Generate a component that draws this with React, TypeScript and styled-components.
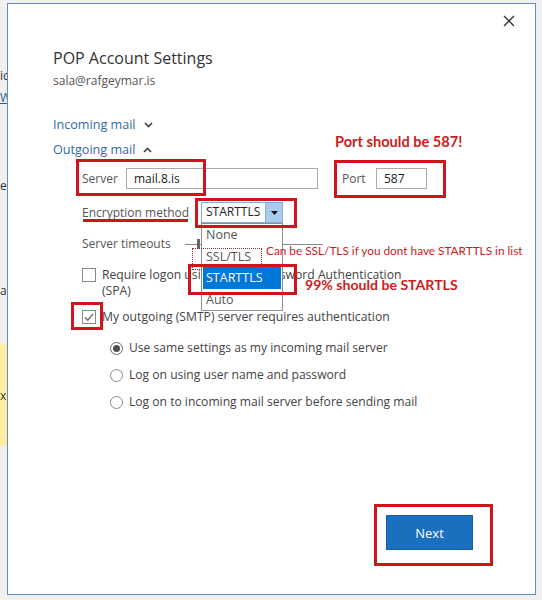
import React from 'react';
import styled, { createGlobalStyle } from 'styled-components';

const GlobalStyle = createGlobalStyle`
  html, body { margin: 0; padding: 0; background: #f0f0f0; }
  body { font-family: 'Open Sans', 'Noto Sans', sans-serif; }
  * { box-sizing: border-box; }
`;

const Page = styled.div`
  position: relative;
  width: 542px;
  height: 600px;
  display: flex;
  align-items: flex-start;
  background: #f0f0f0;
  overflow: hidden;
  font-family: 'Open Sans', 'Noto Sans', sans-serif;
`;

const Backdrop = styled.div`
  width: 7px;
  height: 600px;
  flex-shrink: 0;
  display: flex;
  flex-direction: column;
  overflow: hidden;
  font-size: 12px;
  color: #333;
`;

const BackLine = styled.div<{ $top: number; $shift?: number; $link?: boolean }>`
  margin-top: ${p => p.$top}px;
  height: 16px;
  line-height: 16px;
  white-space: nowrap;
  padding-left: ${p => p.$shift ?? 0}px;
  color: ${p => (p.$link ? '#1f5c99' : '#333')};
  text-decoration: ${p => (p.$link ? 'underline' : 'none')};
`;

const YellowBand = styled.div`
  margin-top: 45px;
  height: 102px;
  background: #fdeea2;
  display: flex;
  align-items: center;
  white-space: nowrap;
  font-size: 12px;
  color: #333;
`;

const Dialog = styled.div`
  margin-top: 3px;
  width: 529px;
  height: 592px;
  flex-shrink: 0;
  background: #fff;
  border: 1px solid #5f8dc4;
  display: flex;
  flex-direction: column;
`;

const TopBar = styled.div`
  height: 43px;
  display: flex;
  justify-content: flex-end;
  align-items: flex-start;
  padding: 11px 20px 0 0;
`;

const CloseButton = styled.div`
  width: 12px;
  height: 12px;
  display: flex;
`;

const Content = styled.div`
  flex: 1;
  display: flex;
  flex-direction: column;
  padding-left: 45px;
`;

const Title = styled.div`
  font-size: 16px;
  line-height: 22px;
  color: #333;
`;

const Email = styled.div`
  margin-top: 4px;
  font-size: 12px;
  line-height: 16px;
  color: #555;
`;

const Toggle = styled.div<{ $gap: number }>`
  margin-top: ${p => p.$gap}px;
  display: flex;
  align-items: center;
  gap: 8px;
  font-size: 12.6px;
  line-height: 18px;
  color: #2f6aa6;
`;

const Indented = styled.div`
  margin-left: 29px;
  display: flex;
  flex-direction: column;
`;

const FieldRow = styled.div<{ $gap: number }>`
  margin-top: ${p => p.$gap}px;
  display: flex;
  align-items: center;
`;

const Label = styled.div<{ $width: number }>`
  width: ${p => p.$width}px;
  flex-shrink: 0;
  font-size: 12px;
  line-height: 16px;
  color: #555;
  white-space: nowrap;
`;

const TextInput = styled.div<{ $width: number; $after?: number }>`
  width: ${p => p.$width}px;
  height: 21px;
  margin-right: ${p => p.$after ?? 0}px;
  border: 1px solid #ababab;
  padding: 2px 0 0 7px;
  font-size: 12px;
  line-height: 16px;
  color: #222;
`;

const SelectWrap = styled.div`
  position: relative;
  width: 82px;
  height: 21px;
  display: flex;
  border: 1px solid #7eb0e2;
  font-size: 12px;
  color: #222;
`;

const SelectValue = styled.div`
  flex: 1;
  padding: 1px 0 0 4px;
  line-height: 16px;
`;

const SelectArrow = styled.div`
  width: 17px;
  background: #a8ccee;
  border-left: 1px solid #7eb0e2;
  display: flex;
  align-items: center;
  justify-content: center;
`;

const DropList = styled.div`
  position: absolute;
  top: 20px;
  left: -1px;
  width: 82px;
  height: 88px;
  background: #fff;
  border: 1px solid #8f8f8f;
  padding: 0 1px;
  display: flex;
  flex-direction: column;
  z-index: 2;
`;

const DropItem = styled.div<{ $active?: boolean }>`
  height: 21.5px;
  padding: 2px 0 0 3px;
  font-size: 12.5px;
  line-height: 17px;
  background: ${p => (p.$active ? '#0078d7' : 'transparent')};
  color: ${p => (p.$active ? '#fff' : '#555')};
`;

const SliderTrack = styled.div`
  position: relative;
  width: 138px;
  height: 1px;
  background: #8a8a8a;
`;

const SliderThumb = styled.div`
  position: absolute;
  left: 12px;
  top: -5px;
  width: 3px;
  height: 10px;
  background: #666;
`;

const CheckRow = styled.div<{ $gap: number }>`
  margin-top: ${p => p.$gap}px;
  display: flex;
  align-items: flex-start;
  gap: 6px;
`;

const Box = styled.div`
  width: 14px;
  height: 14px;
  margin-top: 1px;
  flex-shrink: 0;
  border: 1px solid #8a8a8a;
  background: #fff;
  display: flex;
  align-items: center;
  justify-content: center;
`;

const CheckText = styled.div`
  font-size: 12.2px;
  line-height: 16px;
  color: #444;
  white-space: nowrap;
`;

const RadioGroup = styled.div`
  margin-top: 15px;
  margin-left: 28px;
  display: flex;
  flex-direction: column;
  gap: 11px;
`;

const RadioRow = styled.div`
  display: flex;
  align-items: center;
  gap: 6px;
  font-size: 12.1px;
  line-height: 16px;
  color: #444;
`;

const RadioCircle = styled.div<{ $on?: boolean }>`
  width: 13px;
  height: 13px;
  border-radius: 50%;
  border: 1px solid ${p => (p.$on ? '#6a6a6a' : '#8a8a8a')};
  background: #fff;
  display: flex;
  align-items: center;
  justify-content: center;
  &::after {
    content: '';
    width: 7px;
    height: 7px;
    border-radius: 50%;
    background: ${p => (p.$on ? '#4f4f4f' : 'transparent')};
  }
`;

const Footer = styled.div`
  margin-top: auto;
  display: flex;
  justify-content: flex-end;
  padding: 0 62px 44px 0;
`;

const NextButton = styled.div`
  width: 87px;
  height: 35px;
  background: #1a6fbf;
  border: 1px solid #155fa6;
  color: #fff;
  font-size: 13px;
  display: flex;
  align-items: center;
  justify-content: center;
`;

/* ---------- annotation overlays ---------- */

const RedBox = styled.div<{ $x: number; $y: number; $w: number; $h: number }>`
  position: absolute;
  left: ${p => p.$x}px;
  top: ${p => p.$y}px;
  width: ${p => p.$w}px;
  height: ${p => p.$h}px;
  border: 3px solid #d0141c;
  z-index: 5;
  pointer-events: none;
`;

const RedLine = styled.div`
  position: absolute;
  left: 83px;
  top: 219px;
  width: 105px;
  height: 3px;
  background: #d0141c;
  z-index: 5;
`;

const DottedFocus = styled.div`
  position: absolute;
  left: 192px;
  top: 248px;
  width: 70px;
  height: 22px;
  border: 1px dotted #9a3030;
  z-index: 4;
`;

const Note = styled.div<{ $x: number; $y: number; $bold?: boolean; $size: number }>`
  position: absolute;
  left: ${p => p.$x}px;
  top: ${p => p.$y}px;
  font-family: Lato, 'Open Sans', sans-serif;
  font-size: ${p => p.$size}px;
  font-weight: ${p => (p.$bold ? 700 : 400)};
  line-height: 1;
  color: #cc1c1c;
  white-space: nowrap;
  z-index: 5;
`;

const ChevronDown = () => (
  <svg width="9" height="6" viewBox="0 0 9 6">
    <polyline points="1,1 4.5,4.5 8,1" fill="none" stroke="#444" strokeWidth="1.7" />
  </svg>
);

const ChevronUp = () => (
  <svg width="9" height="6" viewBox="0 0 9 6">
    <polyline points="1,5 4.5,1.5 8,5" fill="none" stroke="#444" strokeWidth="1.7" />
  </svg>
);

const CheckMark = () => (
  <svg width="12" height="12" viewBox="0 0 12 12">
    <polyline points="2,6.5 4.8,9.2 10,2.8" fill="none" stroke="#666" strokeWidth="1.3" />
  </svg>
);

export default function App() {
  return (
    <>
      <GlobalStyle />
      <Page>
        <Backdrop>
          <BackLine $top={68}>ic</BackLine>
          <BackLine $top={6} $shift={-1} $link>Wi</BackLine>
          <BackLine $top={72}>e</BackLine>
          <BackLine $top={89}>ai</BackLine>
          <YellowBand>xp</YellowBand>
        </Backdrop>
        <Dialog>
          <TopBar>
            <CloseButton>
              <svg width="12" height="12" viewBox="0 0 12 12">
                <path d="M1 1 L11 11 M11 1 L1 11" stroke="#333" strokeWidth="1.3" />
              </svg>
            </CloseButton>
          </TopBar>
          <Content>
            <Title>POP Account Settings</Title>
            <Email>sala@rafgeymar.is</Email>
            <Toggle $gap={27}>
              Incoming mail <ChevronDown />
            </Toggle>
            <Toggle $gap={7}>
              Outgoing mail <ChevronUp />
            </Toggle>
            <Indented>
              <FieldRow $gap={9}>
                <Label $width={44}>Server</Label>
                <TextInput $width={192} $after={24}>mail.8.is</TextInput>
                <Label $width={34}>Port</Label>
                <TextInput $width={51}>587</TextInput>
              </FieldRow>
              <FieldRow $gap={13}>
                <Label $width={119}>Encryption method</Label>
                <SelectWrap>
                  <SelectValue>STARTTLS</SelectValue>
                  <SelectArrow>
                    <svg width="7" height="4" viewBox="0 0 7 4">
                      <polygon points="0,0 7,0 3.5,4" fill="#111" />
                    </svg>
                  </SelectArrow>
                  <DropList>
                    <DropItem>None</DropItem>
                    <DropItem>SSL/TLS</DropItem>
                    <DropItem $active>STARTTLS</DropItem>
                    <DropItem>Auto</DropItem>
                  </DropList>
                </SelectWrap>
              </FieldRow>
              <FieldRow $gap={13}>
                <Label $width={103}>Server timeouts</Label>
                <SliderTrack>
                  <SliderThumb />
                </SliderTrack>
              </FieldRow>
              <CheckRow $gap={15}>
                <Box />
                <CheckText>
                  Require logon using Secure Password Authentication
                  <br />
                  (SPA)
                </CheckText>
              </CheckRow>
              <CheckRow $gap={10}>
                <Box>
                  <CheckMark />
                </Box>
                <CheckText>My outgoing (SMTP) server requires authentication</CheckText>
              </CheckRow>
              <RadioGroup>
                <RadioRow>
                  <RadioCircle $on />
                  Use same settings as my incoming mail server
                </RadioRow>
                <RadioRow>
                  <RadioCircle />
                  Log on using user name and password
                </RadioRow>
                <RadioRow>
                  <RadioCircle />
                  Log on to incoming mail server before sending mail
                </RadioRow>
              </RadioGroup>
            </Indented>
            <Footer>
              <NextButton>Next</NextButton>
            </Footer>
          </Content>
        </Dialog>

        <Note $x={335} $y={135} $bold $size={14.6}>Port should be 587!</Note>
        <Note $x={266} $y={245} $size={11.8}>Can be SSL/TLS if you dont have STARTTLS in list</Note>
        <Note $x={305} $y={278} $bold $size={14.1}>99% should be STARTLS</Note>

        <RedBox $x={76} $y={159} $w={130} $h={37} />
        <RedBox $x={334} $y={160} $w={112} $h={38} />
        <RedBox $x={195} $y={198} $w={102} $h={30} />
        <RedLine />
        <DottedFocus />
        <RedBox $x={188} $y={264} $w={109} $h={31} />
        <RedBox $x={71} $y={302} $w={32} $h={28} />
        <RedBox $x={374} $y={504} $w={119} $h={62} />
      </Page>
    </>
  );
}
